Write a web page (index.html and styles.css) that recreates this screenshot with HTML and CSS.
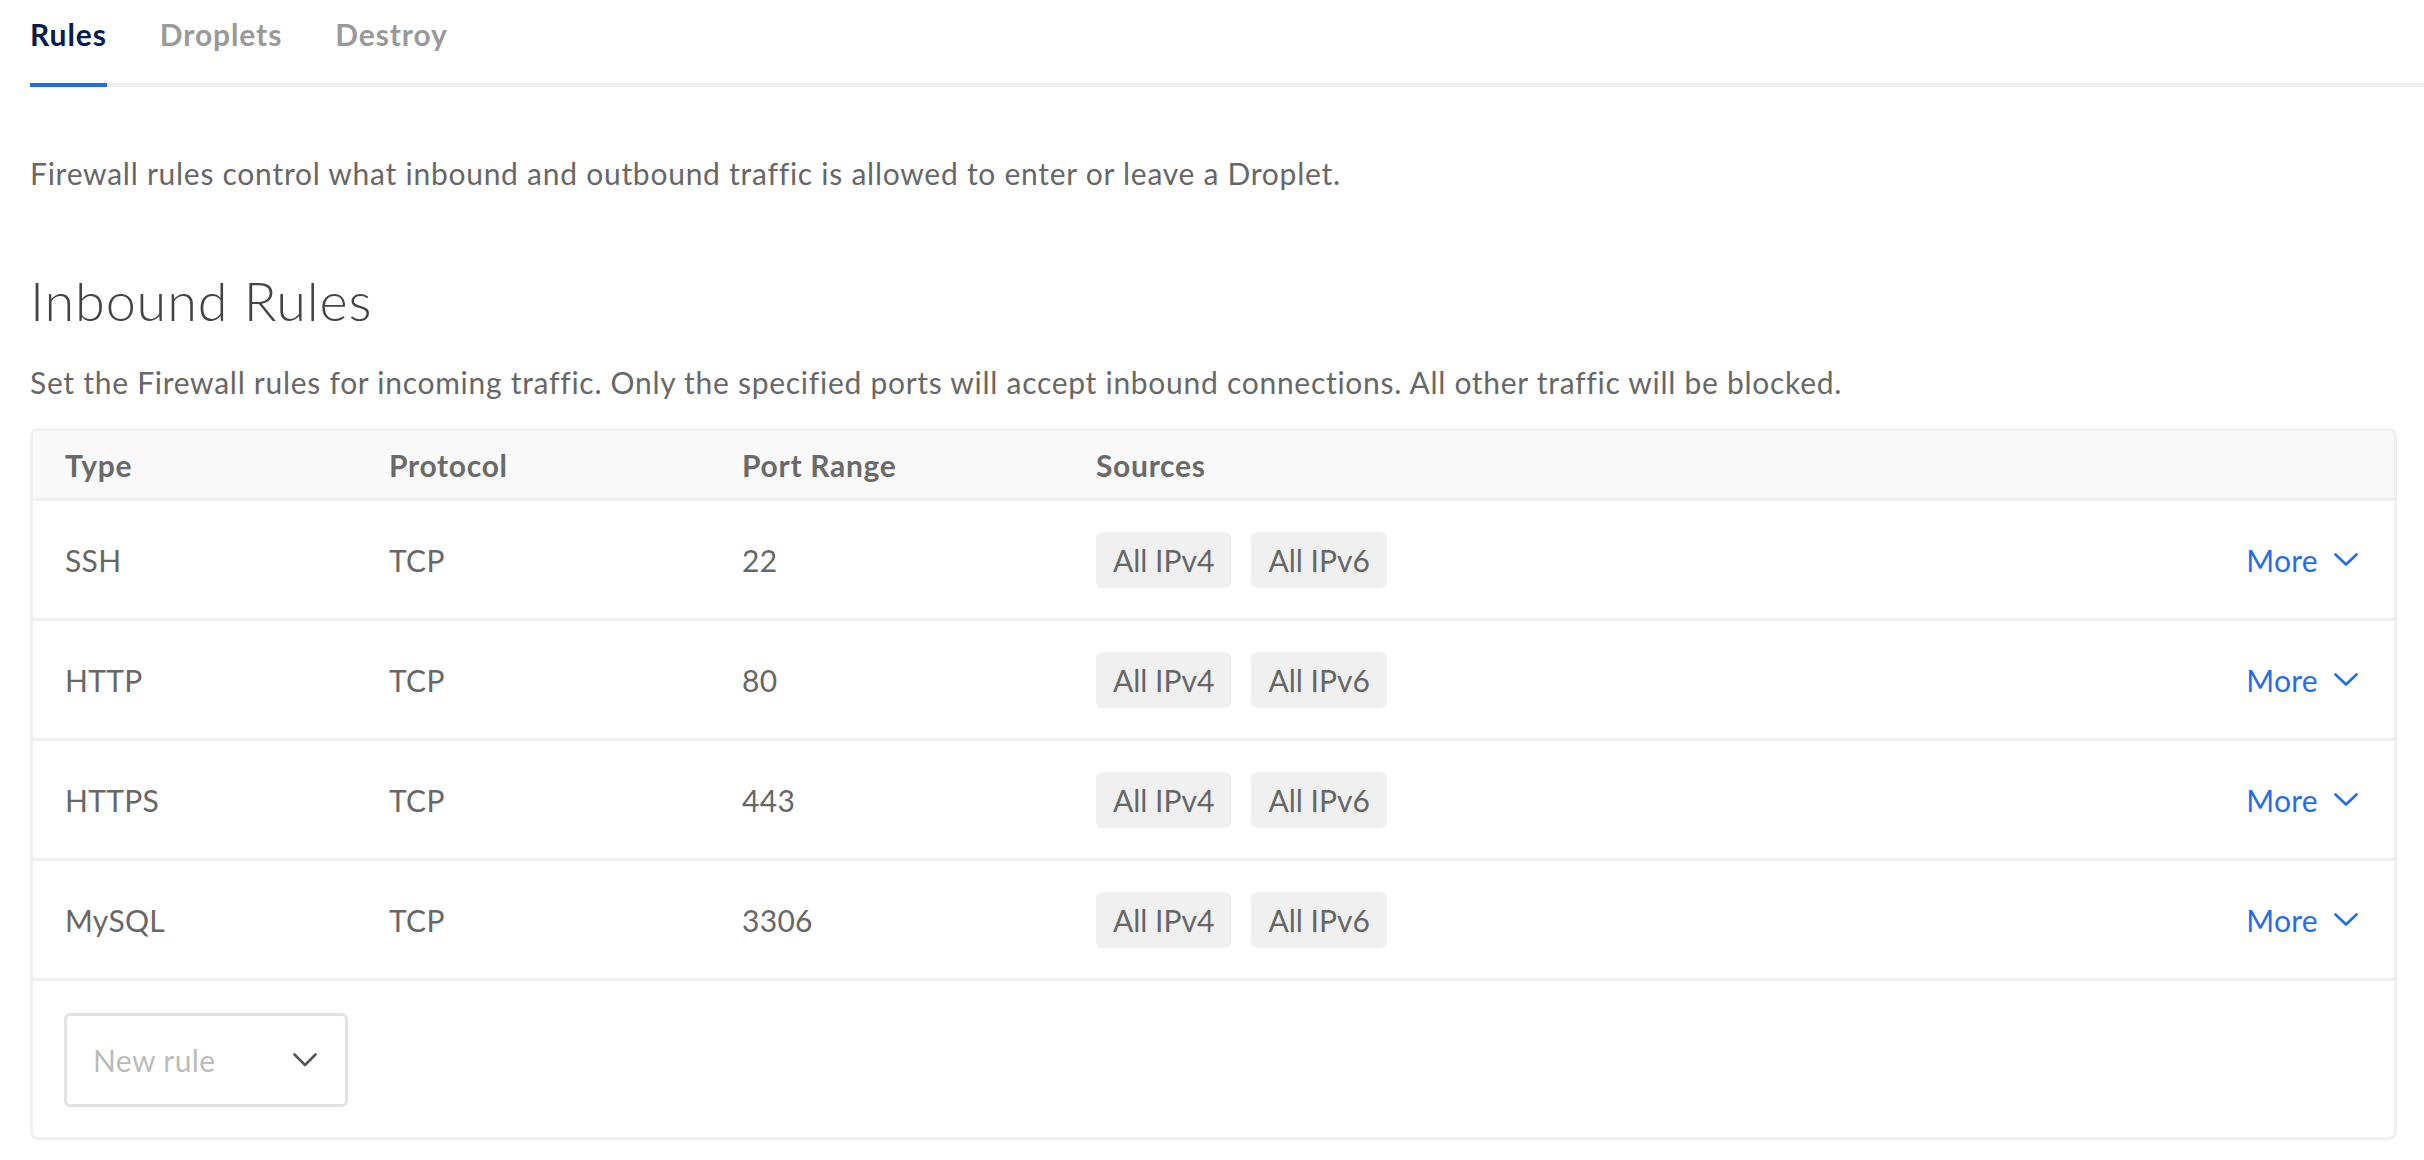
FILE: index.html
```html
<!DOCTYPE html>
<html lang="en">
<head>
<meta charset="utf-8">
<title>Firewall Rules</title>
<link rel="stylesheet" href="styles.css">
</head>
<body>
<div class="page">
  <nav class="tabs">
    <a class="tab active">Rules</a>
    <a class="tab">Droplets</a>
    <a class="tab">Destroy</a>
  </nav>

  <p class="intro">Firewall rules control what inbound and outbound traffic is allowed to enter or leave a Droplet.</p>

  <h2 class="section-title">Inbound Rules</h2>
  <p class="section-desc">Set the Firewall rules for incoming traffic. Only the specified ports will accept inbound connections. All other traffic will be blocked.</p>

  <div class="rules-table">
    <div class="row head">
      <div class="cell">Type</div>
      <div class="cell">Protocol</div>
      <div class="cell">Port Range</div>
      <div class="cell">Sources</div>
      <div class="cell"></div>
    </div>
    <div class="row">
      <div class="cell">SSH</div>
      <div class="cell">TCP</div>
      <div class="cell">22</div>
      <div class="cell sources"><span class="pill">All IPv4</span><span class="pill">All IPv6</span></div>
      <div class="cell more">More <svg class="chev" viewBox="0 0 24 13" width="24" height="13"><polyline points="1.5,1.5 12,11.5 22.5,1.5"/></svg></div>
    </div>
    <div class="row">
      <div class="cell">HTTP</div>
      <div class="cell">TCP</div>
      <div class="cell">80</div>
      <div class="cell sources"><span class="pill">All IPv4</span><span class="pill">All IPv6</span></div>
      <div class="cell more">More <svg class="chev" viewBox="0 0 24 13" width="24" height="13"><polyline points="1.5,1.5 12,11.5 22.5,1.5"/></svg></div>
    </div>
    <div class="row">
      <div class="cell">HTTPS</div>
      <div class="cell">TCP</div>
      <div class="cell">443</div>
      <div class="cell sources"><span class="pill">All IPv4</span><span class="pill">All IPv6</span></div>
      <div class="cell more">More <svg class="chev" viewBox="0 0 24 13" width="24" height="13"><polyline points="1.5,1.5 12,11.5 22.5,1.5"/></svg></div>
    </div>
    <div class="row">
      <div class="cell">MySQL</div>
      <div class="cell">TCP</div>
      <div class="cell">3306</div>
      <div class="cell sources"><span class="pill">All IPv4</span><span class="pill">All IPv6</span></div>
      <div class="cell more">More <svg class="chev" viewBox="0 0 24 13" width="24" height="13"><polyline points="1.5,1.5 12,11.5 22.5,1.5"/></svg></div>
    </div>
    <div class="footer">
      <div class="select">
        <span class="placeholder">New rule</span>
        <svg class="select-chev" viewBox="0 0 24 14" width="24" height="14"><polyline points="1.5,1.5 12,12 22.5,1.5"/></svg>
      </div>
    </div>
  </div>
</div>
</body>
</html>
```

FILE: styles.css
```css
html, body {
  margin: 0;
  padding: 0;
  background: #fff;
}

body {
  font-family: "Lato", "Open Sans", "Liberation Sans", sans-serif;
  color: #676767;
}

.page {
  padding: 0 27px 0 30px;
}

.tabs {
  display: flex;
  gap: 53px;
  border-bottom: 4px solid #f0f0f0;
  margin-right: -27px;
}

.tab {
  font-size: 30px;
  line-height: 36px;
  font-weight: 700;
  letter-spacing: 0.9px;
  color: #999;
  padding: 16px 0 31px;
  margin-bottom: -4px;
  border-bottom: 4px solid transparent;
}

.tab.active {
  color: #031b4e;
  border-bottom-color: #1f6ef0;
}

.intro {
  margin: 68px 0 0;
  font-size: 30px;
  line-height: 36px;
  letter-spacing: 0.74px;
}

.section-title {
  margin: 77px 0 0;
  font-size: 54px;
  line-height: 65px;
  font-weight: 300;
  letter-spacing: 0.85px;
  color: #444;
}

.section-desc {
  margin: 31px 0 0;
  font-size: 30px;
  line-height: 36px;
  letter-spacing: 0.72px;
}

.rules-table {
  margin-top: 28px;
  border: 3px solid #f0f0f0;
  border-radius: 8px;
  overflow: hidden;
}

.row {
  display: grid;
  grid-template-columns: 356px 353px 354px 1fr auto;
  align-items: center;
  height: 117px;
  border-bottom: 3px solid #f0f0f0;
  padding: 0 36px 0 0;
  font-size: 30px;
  letter-spacing: 0.3px;
}

.row .cell:first-child {
  padding-left: 32px;
}

.row.head {
  height: 67px;
  background: #f9f9f9;
  font-weight: 700;
  color: #6a6a6a;
  font-size: 30px;
  letter-spacing: 0.7px;
}

.sources {
  display: flex;
  gap: 20px;
}

.pill {
  display: inline-flex;
  align-items: center;
  height: 56px;
  padding: 0 17px;
  background: #f0f0f0;
  border-radius: 6px;
  color: #666;
  letter-spacing: 0;
}

.more {
  display: flex;
  align-items: center;
  gap: 16px;
  color: #1f6ef0;
}

.chev polyline,
.select-chev polyline {
  fill: none;
  stroke: currentColor;
  stroke-width: 2.6;
  stroke-linecap: round;
  stroke-linejoin: round;
}

.footer {
  padding: 32px 0 30px 31px;
}

.select {
  width: 284px;
  height: 94px;
  box-sizing: border-box;
  border: 3px solid #e3e3e3;
  border-radius: 6px;
  display: flex;
  align-items: center;
  justify-content: space-between;
  padding: 0 28px 0 26px;
}

.placeholder {
  font-size: 30px;
  letter-spacing: 0.4px;
  color: #bbb;
}

.select-chev {
  color: #555;
}
```
